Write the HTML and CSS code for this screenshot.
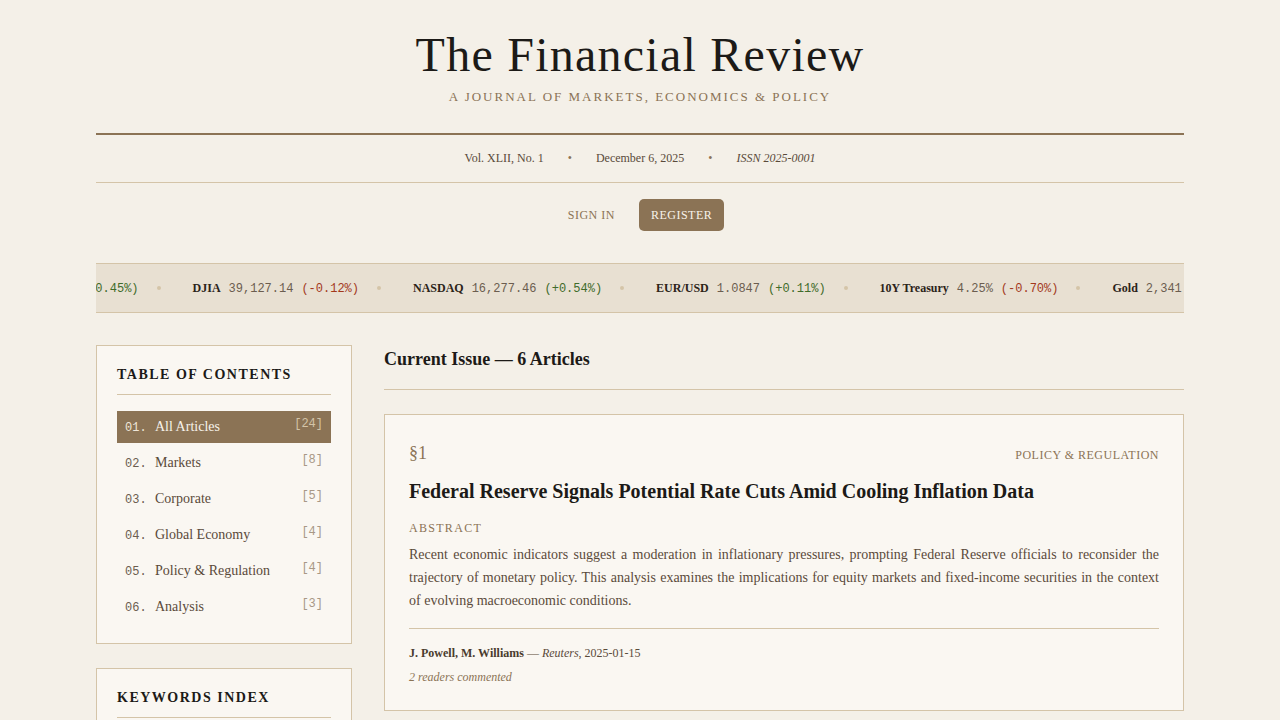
FILE: index.html
```html
<!DOCTYPE html>
<html lang="en">
<head>
<meta charset="utf-8">
<title>The Financial Review</title>
<link rel="stylesheet" href="styles.css">
</head>
<body>
<div class="page">
  <header class="masthead">
    <h1 class="title">The Financial Review</h1>
    <p class="subtitle">A Journal of Markets, Economics &amp; Policy</p>
  </header>
  <div class="meta">
    <span>Vol. XLII, No. 1</span>
    <span class="bullet">•</span>
    <span>December 6, 2025</span>
    <span class="bullet">•</span>
    <span class="issn">ISSN 2025-0001</span>
  </div>
  <div class="auth">
    <button class="btn btn-ghost">Sign In</button>
    <button class="btn btn-solid">Register</button>
  </div>
  <div class="ticker">
    <div class="ticker-track">
      <span class="tick"><b class="sym">S&amp;P 500</b><span class="val">5,234.18</span><span class="chg up">(+0.45%)</span></span>
      <span class="sep"></span>
      <span class="tick"><b class="sym">DJIA</b><span class="val">39,127.14</span><span class="chg down">(-0.12%)</span></span>
      <span class="sep"></span>
      <span class="tick"><b class="sym">NASDAQ</b><span class="val">16,277.46</span><span class="chg up">(+0.54%)</span></span>
      <span class="sep"></span>
      <span class="tick"><b class="sym">EUR/USD</b><span class="val">1.0847</span><span class="chg up">(+0.11%)</span></span>
      <span class="sep"></span>
      <span class="tick"><b class="sym">10Y Treasury</b><span class="val">4.25%</span><span class="chg down">(-0.70%)</span></span>
      <span class="sep"></span>
      <span class="tick"><b class="sym">Gold</b><span class="val">2,341.20</span><span class="chg up">(+0.32%)</span></span>
      <span class="sep"></span>
      <span class="tick"><b class="sym">Crude Oil</b><span class="val">78.45</span><span class="chg down">(-1.05%)</span></span>
    </div>
  </div>
  <div class="layout">
    <aside class="sidebar">
      <section class="card">
        <h2 class="card-title">Table of Contents</h2>
        <ul class="toc">
          <li class="toc-item active"><span class="num">01.</span><span class="name">All Articles</span><span class="count">[24]</span></li>
          <li class="toc-item"><span class="num">02.</span><span class="name">Markets</span><span class="count">[8]</span></li>
          <li class="toc-item"><span class="num">03.</span><span class="name">Corporate</span><span class="count">[5]</span></li>
          <li class="toc-item"><span class="num">04.</span><span class="name">Global Economy</span><span class="count">[4]</span></li>
          <li class="toc-item"><span class="num">05.</span><span class="name">Policy &amp; Regulation</span><span class="count">[4]</span></li>
          <li class="toc-item"><span class="num">06.</span><span class="name">Analysis</span><span class="count">[3]</span></li>
        </ul>
      </section>
      <section class="card">
        <h2 class="card-title">Keywords Index</h2>
        <div class="kw">
          <span>inflation</span><span>interest rates</span><span>equities</span>
        </div>
      </section>
    </aside>
    <main class="content">
      <h2 class="issue-title">Current Issue — 6 Articles</h2>
      <article class="article">
        <div class="art-head">
          <span class="sect">§1</span>
          <span class="cat">Policy &amp; Regulation</span>
        </div>
        <h3 class="art-title">Federal Reserve Signals Potential Rate Cuts Amid Cooling Inflation Data</h3>
        <div class="abs-label">Abstract</div>
        <p class="abs">Recent economic indicators suggest a moderation in inflationary pressures, prompting Federal Reserve officials to reconsider the trajectory of monetary policy. This analysis examines the implications for equity markets and fixed-income securities in the context of evolving macroeconomic conditions.</p>
        <div class="art-foot">
          <div class="byline"><b>J. Powell, M. Williams</b> — <i>Reuters</i>, 2025-01-15</div>
          <div class="comments">2 readers commented</div>
        </div>
      </article>
    </main>
  </div>
</div>
</body>
</html>
```

FILE: styles.css
```css
* { box-sizing: border-box; }
html, body { margin: 0; padding: 0; }
body {
  background: #f4f0e8;
  font-family: "Liberation Serif", "Times New Roman", serif;
  color: #2c2419;
}
.page {
  width: 1088px;
  margin: 0 auto;
}
.masthead {
  text-align: center;
  padding: 27px 0 27px;
  border-bottom: 2px solid #8b7355;
}
.title {
  margin: 0;
  font-size: 48px;
  font-weight: 400;
  letter-spacing: 1.25px;
  line-height: 56px;
  color: #1c1a17;
}
.subtitle {
  margin: 5px 0 0;
  font-size: 13px;
  text-transform: uppercase;
  letter-spacing: 2px;
  color: #8b7355;
  line-height: 18px;
}
.meta {
  display: flex;
  justify-content: center;
  align-items: center;
  gap: 24px;
  height: 48px;
  font-size: 12px;
  color: #5a4a3a;
  border-bottom: 1px solid #d4c4a8;
}
.meta .bullet { color: #8b7355; font-size: 12px; }
.issn { font-style: italic; }
.auth {
  display: flex;
  justify-content: center;
  gap: 12px;
  padding: 16px 0 32px;
}
.btn {
  font-family: "Liberation Serif", "Times New Roman", serif;
  font-size: 12px;
  text-transform: uppercase;
  letter-spacing: 0.5px;
  height: 32px;
  padding: 0 12px;
  border: none;
  border-radius: 5px;
  cursor: pointer;
}
.btn-ghost { background: transparent; color: #8b7355; }
.btn-solid { background: #8b7355; color: #f7f2ea; }
.ticker {
  height: 50px;
  background: #e8e0d2;
  border-top: 1px solid #d4c4a8;
  border-bottom: 1px solid #d4c4a8;
  overflow: hidden;
  display: flex;
  align-items: center;
}
.ticker-track {
  display: flex;
  align-items: center;
  white-space: nowrap;
  flex: none;
  transform: translateX(-133px);
}
.tick { display: inline-flex; align-items: baseline; gap: 8px; }
.sym { font-size: 12px; font-weight: 700; color: #2c2419; }
.val, .chg { font-family: "Liberation Mono", "Courier New", monospace; font-size: 12px; }
.val { color: #6b5d4f; }
.chg.up { color: #3f6b2a; }
.chg.down { color: #a3391c; }
.sep {
  width: 4px; height: 4px; border-radius: 50%;
  background: #d4c4a8;
  margin: 0 32px 0 18px;
}
.layout {
  display: grid;
  grid-template-columns: 256px 1fr;
  gap: 32px;
  padding-top: 32px;
  align-items: start;
}
.sidebar { display: flex; flex-direction: column; gap: 24px; }
.card {
  background: #faf7f2;
  border: 1px solid #d4c4a8;
  padding: 20px;
}
.card-title {
  margin: 0;
  font-size: 14px;
  font-weight: 700;
  text-transform: uppercase;
  letter-spacing: 1.5px;
  color: #1c1a17;
  line-height: 18px;
  padding-bottom: 10px;
  border-bottom: 1px solid #d4c4a8;
  margin-bottom: 16px;
}
.toc { list-style: none; margin: 0; padding: 0; display: flex; flex-direction: column; gap: 4px; }
.toc-item {
  display: flex;
  align-items: center;
  height: 32px;
  padding: 0 8px;
  font-size: 14px;
  color: #5a4a3a;
}
.toc-item .num {
  font-family: "Liberation Mono", "Courier New", monospace;
  font-size: 12px;
  color: #6b5d4f;
  width: 30px;
  margin-top: 1px;
}
.toc-item .name { flex: 1; }
.toc-item .count {
  font-family: "Liberation Mono", "Courier New", monospace;
  font-size: 12px;
  color: #a89886;
  align-self: flex-start;
  margin-top: 6px;
}
.toc-item.active { background: #8b7355; color: #f7f2ea; }
.toc-item.active .num { color: #efe6d8; }
.toc-item.active .count { color: #d4c4a8; }
.kw { display: flex; gap: 8px; flex-wrap: wrap; font-size: 13px; color: #5a4a3a; }
.content { min-width: 0; }
.issue-title {
  margin: 0 0 24px;
  font-size: 18px;
  font-weight: 700;
  color: #1c1a17;
  line-height: 28px;
  padding-bottom: 16px;
  border-bottom: 1px solid #d4c4a8;
}
.article {
  background: #faf7f2;
  border: 1px solid #d4c4a8;
  padding: 26px 24px 23px;
}
.art-head {
  display: flex;
  justify-content: space-between;
  align-items: baseline;
  line-height: 24px;
}
.sect { font-size: 18px; color: #8b7355; }
.cat { font-size: 12px; text-transform: uppercase; letter-spacing: 0.5px; color: #8b7355; }
.art-title {
  margin: 10px 0 14px;
  font-size: 20px;
  line-height: 28px;
  font-weight: 700;
  color: #1c1a17;
}
.abs-label {
  font-size: 12px;
  text-transform: uppercase;
  letter-spacing: 1.3px;
  color: #8b7355;
  line-height: 18px;
  margin-bottom: 6px;
}
.abs {
  margin: 0;
  font-size: 14px;
  line-height: 23px;
  color: #5a4a3a;
  text-align: justify;
}
.art-foot {
  margin-top: 16px;
  padding-top: 14px;
  border-top: 1px solid #d4c4a8;
  font-size: 12px;
  color: #5a4a3a;
}
.byline { line-height: 20px; }
.byline b { color: #4a3c2e; }
.comments { margin-top: 4px; font-style: italic; color: #8b7355; line-height: 20px; }
```
